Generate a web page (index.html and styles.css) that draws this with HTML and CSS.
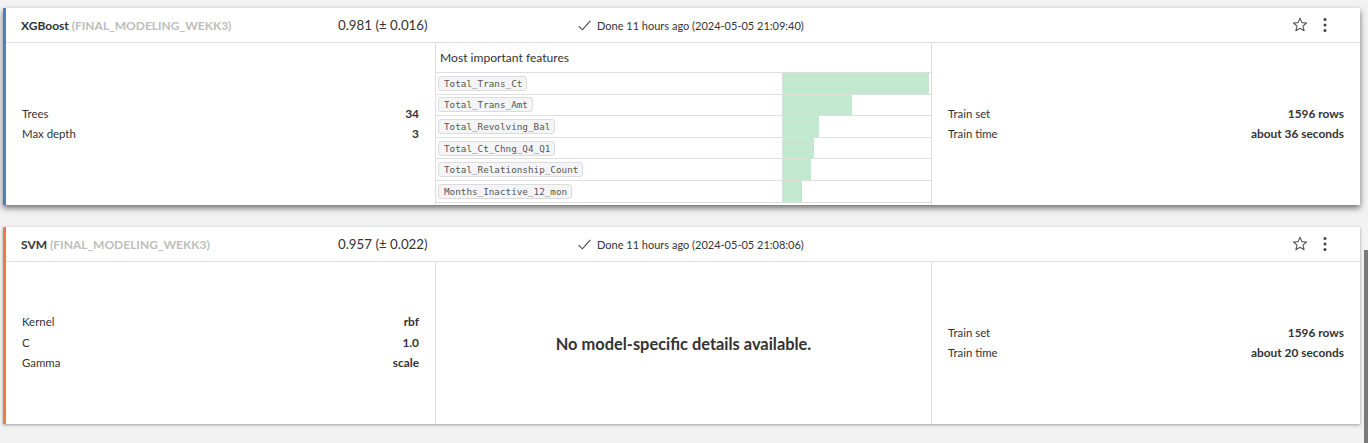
FILE: index.html
```html
<!DOCTYPE html>
<html>
<head>
<meta charset="utf-8">
<link rel="stylesheet" href="styles.css">
</head>
<body>
<div class="page">
  <div class="card card-blue card-hover">
    <div class="card-header">
      <div class="model-name"><span class="algo">XGBoost</span> <span class="session">(FINAL_MODELING_WEKK3)</span></div>
      <div class="score">0.981 (± 0.016)</div>
      <div class="status">
        <svg class="check" width="13" height="11" viewBox="0 0 13 11"><path d="M0.7 6.2 L4.4 9.8 L12.3 0.8" fill="none" stroke="#444" stroke-width="1.1"/></svg>
        <span>Done 11 hours ago (2024-05-05 21:09:40)</span>
      </div>
      <div class="actions">
        <svg class="star" width="16" height="16" viewBox="0 0 16 16"><path d="M8 1.3 L9.9 5.6 L14.5 6 L11 9.1 L12.1 13.7 L8 11.3 L3.9 13.7 L5 9.1 L1.5 6 L6.1 5.6 Z" fill="none" stroke="#555" stroke-width="1.1" stroke-linejoin="round"/></svg>
        <svg class="kebab" width="4" height="16" viewBox="0 0 4 16"><circle cx="2" cy="2.5" r="1.5" fill="#444"/><circle cx="2" cy="8" r="1.5" fill="#444"/><circle cx="2" cy="13.5" r="1.5" fill="#444"/></svg>
      </div>
    </div>
    <div class="card-body">
      <div class="kv">
        <div class="kv-row"><span>Trees</span><b>34</b></div>
        <div class="kv-row"><span>Max depth</span><b>3</b></div>
      </div>
      <div class="features">
        <div class="features-title">Most important features</div>
        <div class="feat-table">
          <div class="feat-row"><div class="feat-name"><code>Total_Trans_Ct</code></div><div class="feat-bar"><div class="bar" style="width:146px"></div></div></div>
          <div class="feat-row"><div class="feat-name"><code>Total_Trans_Amt</code></div><div class="feat-bar"><div class="bar" style="width:69px"></div></div></div>
          <div class="feat-row"><div class="feat-name"><code>Total_Revolving_Bal</code></div><div class="feat-bar"><div class="bar" style="width:36px"></div></div></div>
          <div class="feat-row"><div class="feat-name"><code>Total_Ct_Chng_Q4_Q1</code></div><div class="feat-bar"><div class="bar" style="width:31px"></div></div></div>
          <div class="feat-row"><div class="feat-name"><code>Total_Relationship_Count</code></div><div class="feat-bar"><div class="bar" style="width:28px"></div></div></div>
          <div class="feat-row"><div class="feat-name"><code>Months_Inactive_12_mon</code></div><div class="feat-bar"><div class="bar" style="width:19px"></div></div></div>
        </div>
      </div>
      <div class="kv">
        <div class="kv-row"><span>Train set</span><b>1596 rows</b></div>
        <div class="kv-row"><span>Train time</span><b>about 36 seconds</b></div>
      </div>
    </div>
  </div>

  <div class="card card-orange">
    <div class="card-header">
      <div class="model-name"><span class="algo">SVM</span> <span class="session">(FINAL_MODELING_WEKK3)</span></div>
      <div class="score">0.957 (± 0.022)</div>
      <div class="status">
        <svg class="check" width="13" height="11" viewBox="0 0 13 11"><path d="M0.7 6.2 L4.4 9.8 L12.3 0.8" fill="none" stroke="#444" stroke-width="1.1"/></svg>
        <span>Done 11 hours ago (2024-05-05 21:08:06)</span>
      </div>
      <div class="actions">
        <svg class="star" width="16" height="16" viewBox="0 0 16 16"><path d="M8 1.3 L9.9 5.6 L14.5 6 L11 9.1 L12.1 13.7 L8 11.3 L3.9 13.7 L5 9.1 L1.5 6 L6.1 5.6 Z" fill="none" stroke="#555" stroke-width="1.1" stroke-linejoin="round"/></svg>
        <svg class="kebab" width="4" height="16" viewBox="0 0 4 16"><circle cx="2" cy="2.5" r="1.5" fill="#444"/><circle cx="2" cy="8" r="1.5" fill="#444"/><circle cx="2" cy="13.5" r="1.5" fill="#444"/></svg>
      </div>
    </div>
    <div class="card-body">
      <div class="kv">
        <div class="kv-row"><span>Kernel</span><b>rbf</b></div>
        <div class="kv-row"><span>C</span><b>1.0</b></div>
        <div class="kv-row"><span>Gamma</span><b>scale</b></div>
      </div>
      <div class="empty">No model-specific details available.</div>
      <div class="kv">
        <div class="kv-row"><span>Train set</span><b>1596 rows</b></div>
        <div class="kv-row"><span>Train time</span><b>about 20 seconds</b></div>
      </div>
    </div>
  </div>
</div>
<div class="scroll-thumb"></div>
</body>
</html>
```

FILE: styles.css
```css
html, body {
  margin: 0;
  padding: 0;
  background: #f2f2f2;
  font-family: "Lato", "Liberation Sans", sans-serif;
  color: #333;
  overflow: hidden;
}

.page {
  padding: 8px 8px 0 3px;
}

.card {
  background: #fff;
  border-left: 3px solid #4a7fc1;
  margin-bottom: 22px;
  box-shadow: 0 1px 3px rgba(0, 0, 0, 0.35);
}

.card-blue { border-left-color: #4d80bf; }
.card-orange { border-left-color: #f07a4b; }

.card-hover {
  box-shadow: 0 3px 6px rgba(0, 0, 0, 0.55);
}

.card-header {
  height: 34px;
  border-bottom: 1px solid #dedede;
  display: grid;
  grid-template-columns: 317px 240px 1fr auto;
  align-items: center;
  padding-left: 15px;
}

.model-name {
  font-size: 12px;
  font-weight: 700;
  white-space: nowrap;
}

.algo { color: #333; }
.session { color: #bdbdbd; }

.score {
  font-size: 13.3px;
  color: #333;
}

.status {
  display: flex;
  align-items: center;
  gap: 6px;
  font-size: 11px;
  color: #333;
}

.check { display: block; }

.actions {
  display: flex;
  align-items: center;
  gap: 15px;
  padding-right: 33px;
}

.actions svg { display: block; }

.card-body {
  height: 162px;
  display: grid;
  grid-template-columns: 429px 1fr 428px;
  grid-template-rows: minmax(0, 1fr);
  overflow: hidden;
}

.kv {
  display: flex;
  flex-direction: column;
  justify-content: center;
  padding: 0 16px;
  font-size: 11.4px;
}

.kv-row {
  display: flex;
  justify-content: space-between;
  align-items: baseline;
  line-height: 20.5px;
}

.kv-row span { color: #333; }
.kv-row b { font-weight: 700; font-size: 11.9px; color: #333; }

.features,
.empty {
  border-left: 1px solid #dedede;
  border-right: 1px solid #dedede;
}

.features {
  overflow: hidden;
}

.features-title {
  height: 29px;
  line-height: 29px;
  padding-left: 4px;
  font-size: 12.1px;
  color: #333;
}

.feat-table {
  border-top: 1px solid #dedede;
}

.feat-row {
  display: grid;
  grid-template-columns: 347px 1fr;
  height: 21.6px;
  box-sizing: border-box;
  border-bottom: 1px solid #dedede;
}

.feat-name {
  border-right: 1px solid #dedede;
  display: flex;
  align-items: center;
  padding-left: 2px;
}

.feat-name code {
  font-family: "DejaVu Sans Mono", "Liberation Mono", monospace;
  font-size: 9.3px;
  line-height: 13px;
  color: #555;
  background: #f5f5f7;
  border: 1px solid #dcdcdc;
  border-radius: 3px;
  padding: 0 4px 0 5px;
}

.feat-bar {
  display: flex;
  align-items: stretch;
}

.bar {
  background: #c2e8cf;
}

.empty {
  display: flex;
  align-items: center;
  justify-content: center;
  font-size: 16.4px;
  font-weight: 700;
  color: #333;
}

.scroll-thumb {
  position: fixed;
  right: 0;
  top: 250px;
  width: 4px;
  bottom: 0;
  background: #7a7a7a;
}
```
